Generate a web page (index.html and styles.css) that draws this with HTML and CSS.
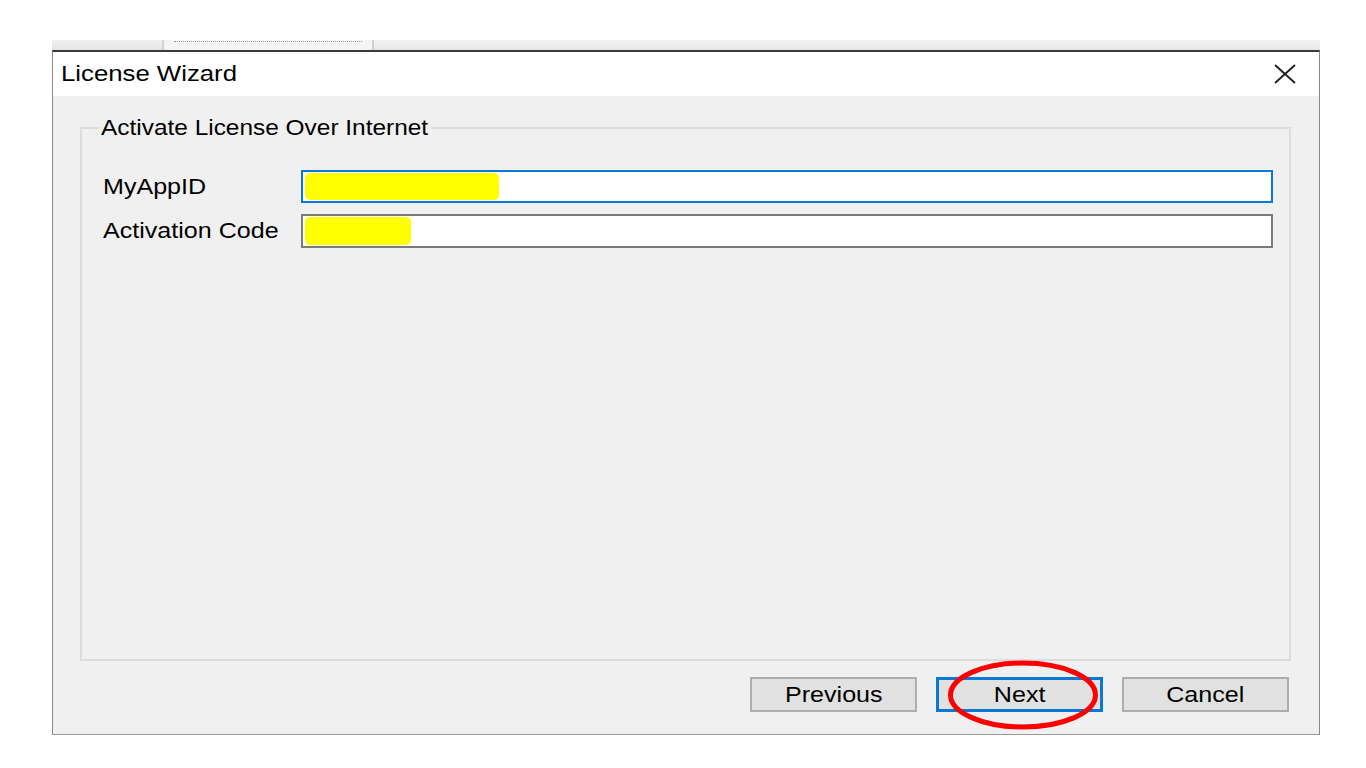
FILE: index.html
```html
<!DOCTYPE html>
<html lang="en">
<head>
<meta charset="utf-8">
<title>License Wizard</title>
<link rel="stylesheet" href="styles.css">
</head>
<body>
  <div class="strip">
    <div class="tab tab-a"></div>
    <div class="tab tab-b"><span class="dots"></span></div>
    <div class="tab tab-c"></div>
  </div>
  <div class="dialog">
    <div class="titlebar">
      <span class="title"><span class="stretch wide">License Wizard</span></span>
      <svg class="close" width="24" height="22" viewBox="0 0 24 22" aria-label="Close">
        <line x1="2" y1="2" x2="22" y2="20" stroke="#1e1e1e" stroke-width="1.8"/>
        <line x1="22" y1="2" x2="2" y2="20" stroke="#1e1e1e" stroke-width="1.8"/>
      </svg>
    </div>
    <div class="body">
      <fieldset class="group">
        <legend class="legend"><span class="stretch narrow">Activate License Over Internet</span></legend>
        <div class="row row-1">
          <label class="label"><span class="stretch">MyAppID</span></label>
          <div class="input focused"><span class="mark mark-1"></span></div>
        </div>
        <div class="row row-2">
          <label class="label"><span class="stretch">Activation Code</span></label>
          <div class="input"><span class="mark mark-2"></span></div>
        </div>
      </fieldset>
      <div class="buttons">
        <button class="btn"><span class="stretch c">Previous</span></button>
        <div class="next-wrap">
          <button class="btn default"><span class="stretch c">Next</span></button>
          <svg class="circle" width="160" height="80" viewBox="0 0 160 80">
            <ellipse cx="80" cy="40" rx="72.5" ry="32" fill="none" stroke="#ff0000" stroke-width="5"/>
          </svg>
        </div>
        <button class="btn"><span class="stretch c">Cancel</span></button>
      </div>
    </div>
  </div>
</body>
</html>
```

FILE: styles.css
```css
* { box-sizing: border-box; }

html, body {
  margin: 0;
  padding: 0;
  background: #ffffff;
  font-family: "Liberation Sans", Arial, sans-serif;
  color: #000;
}

.stretch {
  display: inline-block;
  transform: scaleX(1.14);
  transform-origin: left center;
  white-space: nowrap;
}
.stretch.wide { transform: scaleX(1.17); }
.stretch.narrow { transform: scaleX(1.11); }
.stretch.c { transform-origin: center center; }

.strip {
  margin: 40px 0 0 52px;
  width: 1268px;
  height: 10px;
  display: flex;
}
.tab { height: 10px; }
.tab-a {
  width: 112px;
  background: linear-gradient(#f0f0f0, #e6e6e6);
  border-right: 2px solid #d2d2d2;
}
.tab-b {
  width: 210px;
  background: #f4f4f4;
  border-right: 2px solid #d0d0d0;
  padding: 1px 10px 0 10px;
}
.dots {
  display: block;
  border-top: 1px dotted #9a9a9a;
}
.tab-c {
  flex: 1;
  background: linear-gradient(#f2f2f2, #e8e8e8);
}

.dialog {
  margin-left: 52px;
  width: 1268px;
  height: 685px;
  border-top: 2px solid #3a3a3a;
  border-left: 1px solid #8a8a8a;
  border-right: 1px solid #8a8a8a;
  border-bottom: 1px solid #9a9a9a;
  display: flex;
  flex-direction: column;
}

.titlebar {
  height: 44px;
  background: #ffffff;
  display: flex;
  align-items: center;
  justify-content: space-between;
  padding: 0 22px 0 8px;
}
.title {
  font-size: 22px;
  line-height: 26px;
}
.close { display: block; }

.body {
  flex: 1;
  background: #f0f0f0;
  padding: 19px 0 0 27px;
  display: flex;
  flex-direction: column;
}

.group {
  margin: 0;
  width: 1211px;
  height: 546px;
  border: 2px solid #dcdcdc;
  padding: 29px 16px 0 21px;
  min-inline-size: 0;
}
.legend {
  font-size: 22px;
  line-height: 26px;
  padding: 0 2px;
  margin-left: -4px;
  width: 332px;
}

.row {
  display: flex;
  align-items: center;
  margin-bottom: 11px;
}
.row-1 .input { height: 33px; }
.row-2 .input { height: 34px; }
.label {
  width: 198px;
  font-size: 22px;
  line-height: 26px;
}
.input {
  flex: 1;
  background: #ffffff;
  border: 2px solid #7a7a7a;
  padding: 1px 2px;
  display: flex;
  align-items: stretch;
}
.input.focused { border-color: #0a78d7; }
.mark {
  display: block;
  background: #ffff00;
  border-radius: 5px;
}
.mark-1 { width: 194px; }
.mark-2 { width: 106px; }

.buttons {
  margin-top: 16px;
  padding-right: 30px;
  display: flex;
  justify-content: flex-end;
  gap: 19px;
}
.btn {
  width: 167px;
  height: 35px;
  background: #e1e1e1;
  border: 2px solid #adadad;
  font-family: "Liberation Sans", Arial, sans-serif;
  font-size: 22px;
  color: #000;
  padding: 0;
  display: flex;
  align-items: center;
  justify-content: center;
}
.btn.default { border: 3px solid #0a78d7; }

.next-wrap { position: relative; }
.circle {
  position: absolute;
  left: 7px;
  top: -22px;
  pointer-events: none;
}
```
